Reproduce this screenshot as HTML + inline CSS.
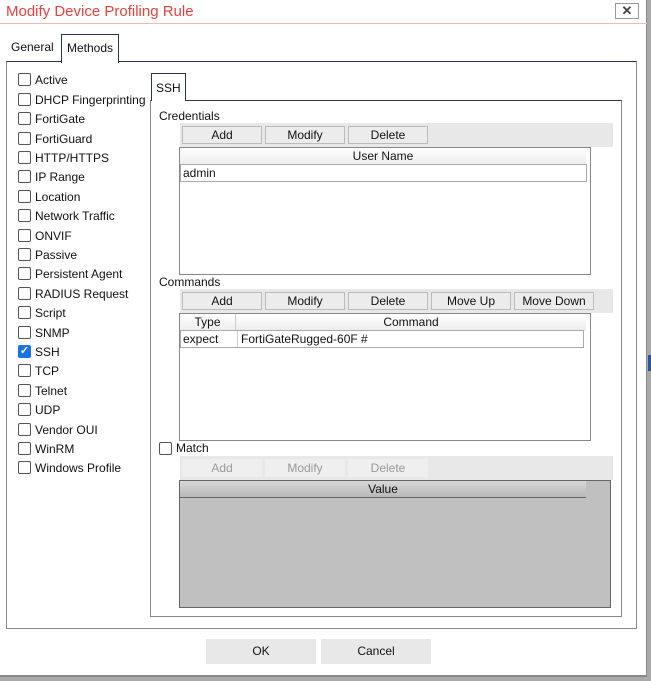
<!DOCTYPE html>
<html><head><style>
*{box-sizing:border-box;margin:0;padding:0}
body{width:651px;height:681px;background:#a9a9a9;font-family:"Liberation Sans",sans-serif;font-size:12px;color:#111;position:relative;overflow:hidden}
.a{position:absolute}
#dlg{left:0;top:0;width:647px;height:677px;background:#fff;border-right:1px solid #888;border-bottom:2px solid #888}
.cb{position:absolute;width:13px;height:13px;border:1px solid #555;border-radius:2px;background:#fff}
.lbl{position:absolute;font-size:12px}
.btn{position:absolute;height:18px;background:#ececec;border:1px solid #bbb;text-align:center;line-height:16px;font-size:12px}
.dis{border-color:#eee;color:#999;background:#efefef}
.bar{position:absolute;background:#e8e8e8}
.hdr{position:absolute;background:linear-gradient(#fff,#ececec);text-align:center;line-height:16px;height:17px}
</style></head><body>
<div id="dlg" class="a"></div>
<div class="a" style="left:6px;top:3px;font-size:15px;color:#e8403c">Modify Device Profiling Rule</div>
<div class="a" style="left:0;top:23px;width:647px;height:1px;background:#f0b8b8"></div>
<div class="a" style="left:615px;top:3px;width:24px;height:16px;border:1px solid #999;text-align:center;line-height:14px;font-size:13px;font-weight:bold;color:#444">✕</div>

<div class="a" style="left:6px;top:61px;width:631px;height:568px;border:1px solid #2c3550;border-bottom-color:#888;border-left-color:#888;border-right-color:#888"></div>
<div class="a" style="left:11px;top:40px">General</div>
<div class="a" style="left:61px;top:34px;width:58px;height:29px;border:1px solid #2c3550;border-bottom:none;background:#fff;padding:6px 0 0 5px">Methods</div>

<div class="cb" style="left:18px;top:73px"></div><div class="lbl" style="left:35px;top:73px">Active</div>
<div class="cb" style="left:18px;top:93px"></div><div class="lbl" style="left:35px;top:93px">DHCP Fingerprinting</div>
<div class="cb" style="left:18px;top:112px"></div><div class="lbl" style="left:35px;top:112px">FortiGate</div>
<div class="cb" style="left:18px;top:132px"></div><div class="lbl" style="left:35px;top:132px">FortiGuard</div>
<div class="cb" style="left:18px;top:151px"></div><div class="lbl" style="left:35px;top:151px">HTTP/HTTPS</div>
<div class="cb" style="left:18px;top:170px"></div><div class="lbl" style="left:35px;top:170px">IP Range</div>
<div class="cb" style="left:18px;top:190px"></div><div class="lbl" style="left:35px;top:190px">Location</div>
<div class="cb" style="left:18px;top:209px"></div><div class="lbl" style="left:35px;top:209px">Network Traffic</div>
<div class="cb" style="left:18px;top:229px"></div><div class="lbl" style="left:35px;top:229px">ONVIF</div>
<div class="cb" style="left:18px;top:248px"></div><div class="lbl" style="left:35px;top:248px">Passive</div>
<div class="cb" style="left:18px;top:267px"></div><div class="lbl" style="left:35px;top:267px">Persistent Agent</div>
<div class="cb" style="left:18px;top:287px"></div><div class="lbl" style="left:35px;top:287px">RADIUS Request</div>
<div class="cb" style="left:18px;top:306px"></div><div class="lbl" style="left:35px;top:306px">Script</div>
<div class="cb" style="left:18px;top:326px"></div><div class="lbl" style="left:35px;top:326px">SNMP</div>
<div class="cb" style="left:18px;top:345px;background:#1a73e8;border-color:#1a73e8;color:#fff;font-size:11px;line-height:11px;text-align:center;font-weight:bold">✓</div><div class="lbl" style="left:35px;top:345px">SSH</div>
<div class="cb" style="left:18px;top:364px"></div><div class="lbl" style="left:35px;top:364px">TCP</div>
<div class="cb" style="left:18px;top:384px"></div><div class="lbl" style="left:35px;top:384px">Telnet</div>
<div class="cb" style="left:18px;top:403px"></div><div class="lbl" style="left:35px;top:403px">UDP</div>
<div class="cb" style="left:18px;top:423px"></div><div class="lbl" style="left:35px;top:423px">Vendor OUI</div>
<div class="cb" style="left:18px;top:442px"></div><div class="lbl" style="left:35px;top:442px">WinRM</div>
<div class="cb" style="left:18px;top:461px"></div><div class="lbl" style="left:35px;top:461px">Windows Profile</div>

<div class="a" style="left:150px;top:100px;width:472px;height:517px;border:1px solid #2c3550;border-bottom-color:#888;border-left-color:#888;border-right-color:#888"></div>
<div class="a" style="left:151px;top:73px;width:35px;height:28px;border:1px solid #2c3550;border-bottom:none;background:#fff;padding:7px 0 0 4px">SSH</div>

<div class="lbl" style="left:159px;top:109px">Credentials</div>
<div class="bar" style="left:180px;top:123px;width:433px;height:24px"></div>
<div class="btn" style="left:182px;top:126px;width:80px">Add</div>
<div class="btn" style="left:265px;top:126px;width:80px">Modify</div>
<div class="btn" style="left:348px;top:126px;width:80px">Delete</div>
<div class="a" style="left:179px;top:147px;width:412px;height:128px;border:1px solid #888;background:#fff"></div>
<div class="hdr" style="left:180px;top:148px;width:406px">User Name</div>
<div class="a" style="left:180px;top:164px;width:407px;height:18px;border:1px solid #aaa;line-height:16px;padding-left:2px">admin</div>

<div class="lbl" style="left:159px;top:275px">Commands</div>
<div class="bar" style="left:180px;top:289px;width:433px;height:24px"></div>
<div class="btn" style="left:182px;top:292px;width:80px">Add</div>
<div class="btn" style="left:265px;top:292px;width:80px">Modify</div>
<div class="btn" style="left:348px;top:292px;width:80px">Delete</div>
<div class="btn" style="left:431px;top:292px;width:80px">Move Up</div>
<div class="btn" style="left:514px;top:292px;width:80px">Move Down</div>
<div class="a" style="left:179px;top:313px;width:412px;height:128px;border:1px solid #888;background:#fff"></div>
<div class="hdr" style="left:180px;top:314px;width:56px;border-right:1px solid #ccc">Type</div>
<div class="hdr" style="left:236px;top:314px;width:350px">Command</div>
<div class="a" style="left:180px;top:330px;width:404px;height:18px;border:1px solid #aaa;line-height:16px"><span style="position:absolute;left:2px">expect</span><span style="position:absolute;left:56px;top:0;height:16px;border-left:1px solid #ccc;padding-left:3px">FortiGateRugged-60F #</span></div>

<div class="cb" style="left:159px;top:442px"></div><div class="lbl" style="left:176px;top:441px">Match</div>
<div class="bar" style="left:180px;top:456px;width:433px;height:24px"></div>
<div class="btn dis" style="left:182px;top:459px;width:80px">Add</div>
<div class="btn dis" style="left:265px;top:459px;width:80px">Modify</div>
<div class="btn dis" style="left:348px;top:459px;width:80px">Delete</div>
<div class="a" style="left:179px;top:480px;width:432px;height:128px;border:1px solid #666;background:#c0c0c0"></div>
<div class="hdr" style="left:180px;top:481px;width:406px;background:linear-gradient(#d8d8d8,#b8b8b8);border-bottom:1px solid #666">Value</div>

<div class="a" style="left:206px;top:639px;width:110px;height:25px;background:#e8e8e8;text-align:center;line-height:25px">OK</div>
<div class="a" style="left:321px;top:639px;width:110px;height:25px;background:#e8e8e8;text-align:center;line-height:25px">Cancel</div>
<div class="a" style="left:648px;top:355px;width:3px;height:16px;background:#2a55a0"></div>
</body></html>
